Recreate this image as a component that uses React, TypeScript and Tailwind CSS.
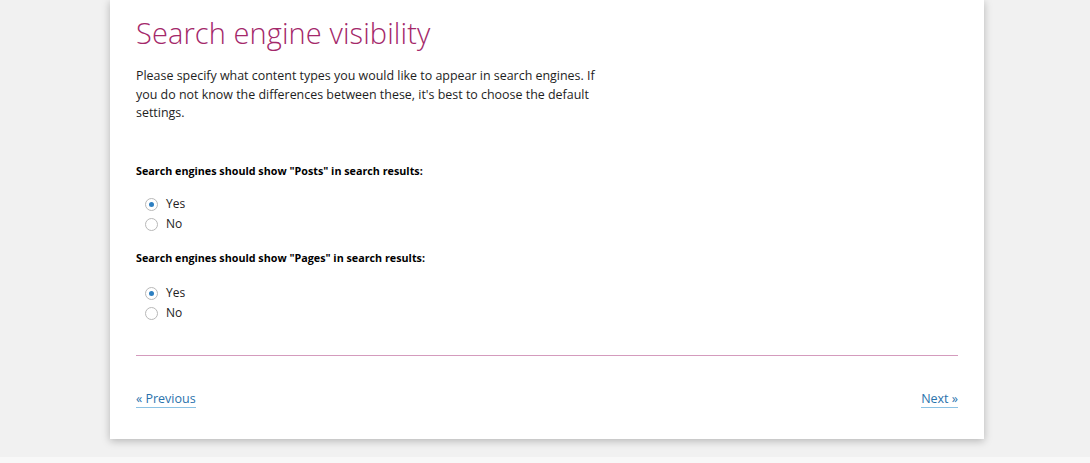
import React from "react";

function Radio({ checked, label }: { checked: boolean; label: string }) {
  return (
    <label className="flex items-center h-[20px] text-[12px] text-[#222]">
      <span className="ml-[9px] mr-[8px] w-[13px] h-[13px] rounded-full border border-[#b8b8b8] bg-white flex items-center justify-center">
        {checked && <span className="w-[5px] h-[5px] rounded-full bg-[#2d7fc1]" />}
      </span>
      {label}
    </label>
  );
}

export default function App() {
  return (
    <div className="w-[1090px] h-[463px] bg-[#f1f1f1] overflow-hidden font-['Open_Sans',sans-serif] flex flex-col">
      <div className="h-[457px] flex">
        <div className="ml-[110px] w-[874px] h-[439px] bg-white shadow-[0_2px_8px_rgba(0,0,0,0.25)] px-[26px] pt-[13px] flex flex-col">
          <h1 className="text-[29px] font-light text-[#a4286a] leading-[40px] tracking-[0.1px]">
            Search engine visibility
          </h1>
          <p className="mt-[14px] h-[55px] whitespace-nowrap text-[12.45px] leading-[18.5px] text-[#1e1e1e]">
            Please specify what content types you would like to appear in search engines. If
            <br />
            you do not know the differences between these, it's best to choose the default
            <br />
            settings.
          </p>
          <div className="mt-[41px] text-[10.75px] font-bold text-black leading-[16px]">
            Search engines should show "Posts" in search results:
          </div>
          <div className="mt-[15px] flex flex-col">
            <Radio checked label="Yes" />
            <Radio checked={false} label="No" />
          </div>
          <div className="mt-[16px] text-[10.75px] font-bold text-black leading-[16px]">
            Search engines should show "Pages" in search results:
          </div>
          <div className="mt-[17px] flex flex-col">
            <Radio checked label="Yes" />
            <Radio checked={false} label="No" />
          </div>
          <div className="mt-[32px] border-t border-[#d49bbd] pt-[34px] flex justify-between text-[12.5px] text-[#2a72ac] leading-[17px]">
            <a className="border-b border-[#8cc2e4]">« Previous</a>
            <a className="border-b border-[#8cc2e4]">Next »</a>
          </div>
        </div>
      </div>
      <div className="flex-1 bg-[#f8f8f8]" />
    </div>
  );
}
